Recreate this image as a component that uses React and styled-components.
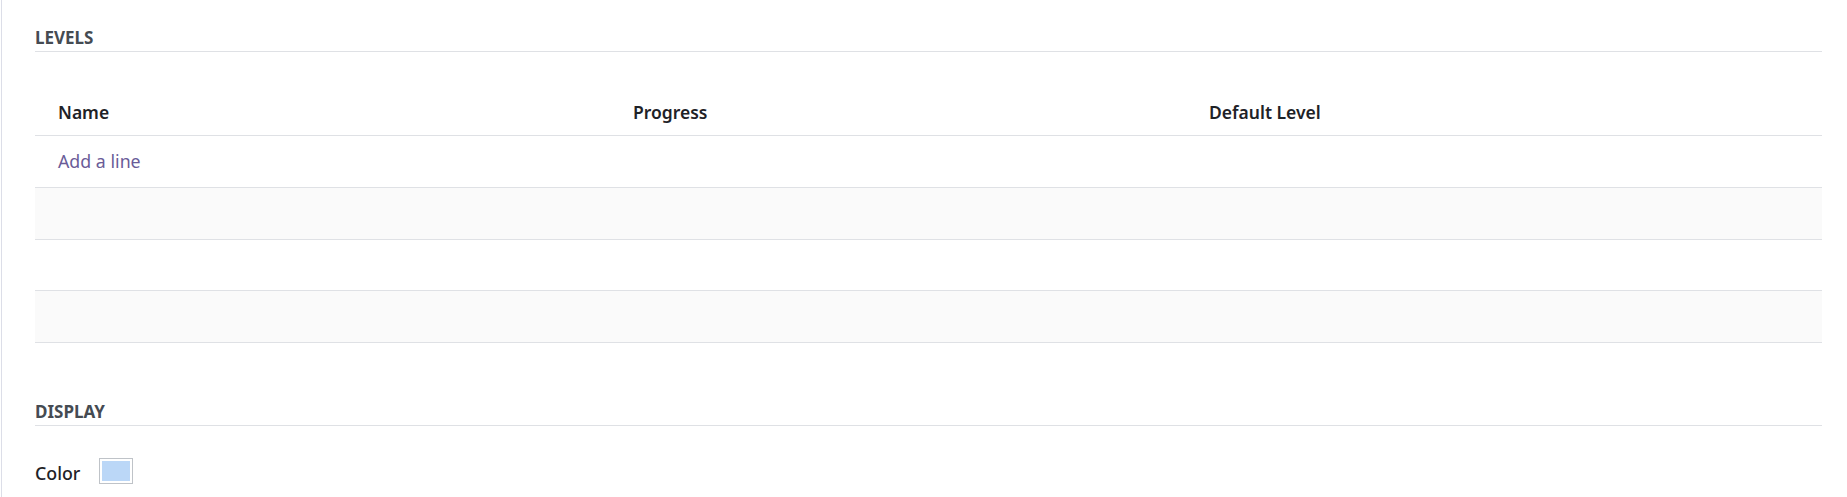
import React from 'react';
import styled, { createGlobalStyle } from 'styled-components';

const GlobalStyle = createGlobalStyle`
  body {
    margin: 0;
    background: #ffffff;
    font-family: "Noto Sans", "Open Sans", sans-serif;
    color: #212529;
  }
`;

const Sheet = styled.div`
  margin-left: 1px;
  min-height: 497px;
  border-left: 1px solid #dcdee8;
  padding: 26px 25px 0 33px;
  box-sizing: border-box;
`;

const SectionTitle = styled.h2`
  margin: ${(p) => (p.spaced ? '57px' : '0')} 0 0;
  padding-bottom: 1px;
  height: 24px;
  line-height: 24px;
  font-size: 17px;
  font-weight: 700;
  text-transform: uppercase;
  color: #454b52;
  border-bottom: 1px solid #dfe1e5;
`;

const Table = styled.div`
  margin-top: 32px;
`;

const Row = styled.div`
  display: grid;
  grid-template-columns: 575px 576px 576px 1fr;
  align-items: center;
  height: ${(p) => (p.head ? '52px' : '51.75px')};
  box-sizing: border-box;
  border-bottom: 1px solid #dfe1e5;
  background: ${(p) => (p.striped ? '#fafafa' : '#ffffff')};
`;

const HeadCell = styled.div`
  padding: 4px 0 0 23px;
  font-size: 17.5px;
  font-weight: 600;
  color: #1e2227;
`;

const AddLine = styled.a`
  padding-left: 23px;
  font-size: 17.8px;
  color: #6a5c98;
  text-decoration: none;
  cursor: pointer;
`;

const Field = styled.div`
  display: flex;
  align-items: center;
  gap: 19px;
  margin-top: 31px;
`;

const Label = styled.span`
  font-size: 17.8px;
  font-weight: 500;
  color: #1e2227;
  padding-top: 4px;
`;

const Swatch = styled.span`
  width: 34px;
  height: 26px;
  flex: none;
  box-sizing: border-box;
  border: 1px solid #bfc3c8;
  padding: 2px;
  background: #ffffff;
  display: block;

  &::after {
    content: '';
    display: block;
    width: 100%;
    height: 100%;
    background: ${(p) => p.color};
  }
`;

export default function App() {
  return (
    <Sheet>
      <GlobalStyle />
      <SectionTitle>Levels</SectionTitle>
      <Table>
        <Row head>
          <HeadCell>Name</HeadCell>
          <HeadCell>Progress</HeadCell>
          <HeadCell>Default Level</HeadCell>
          <div />
        </Row>
        <Row>
          <AddLine>Add a line</AddLine>
        </Row>
        <Row striped />
        <Row />
        <Row striped />
      </Table>
      <SectionTitle spaced>Display</SectionTitle>
      <Field>
        <Label>Color</Label>
        <Swatch color="#bbd7f7" />
      </Field>
    </Sheet>
  );
}
